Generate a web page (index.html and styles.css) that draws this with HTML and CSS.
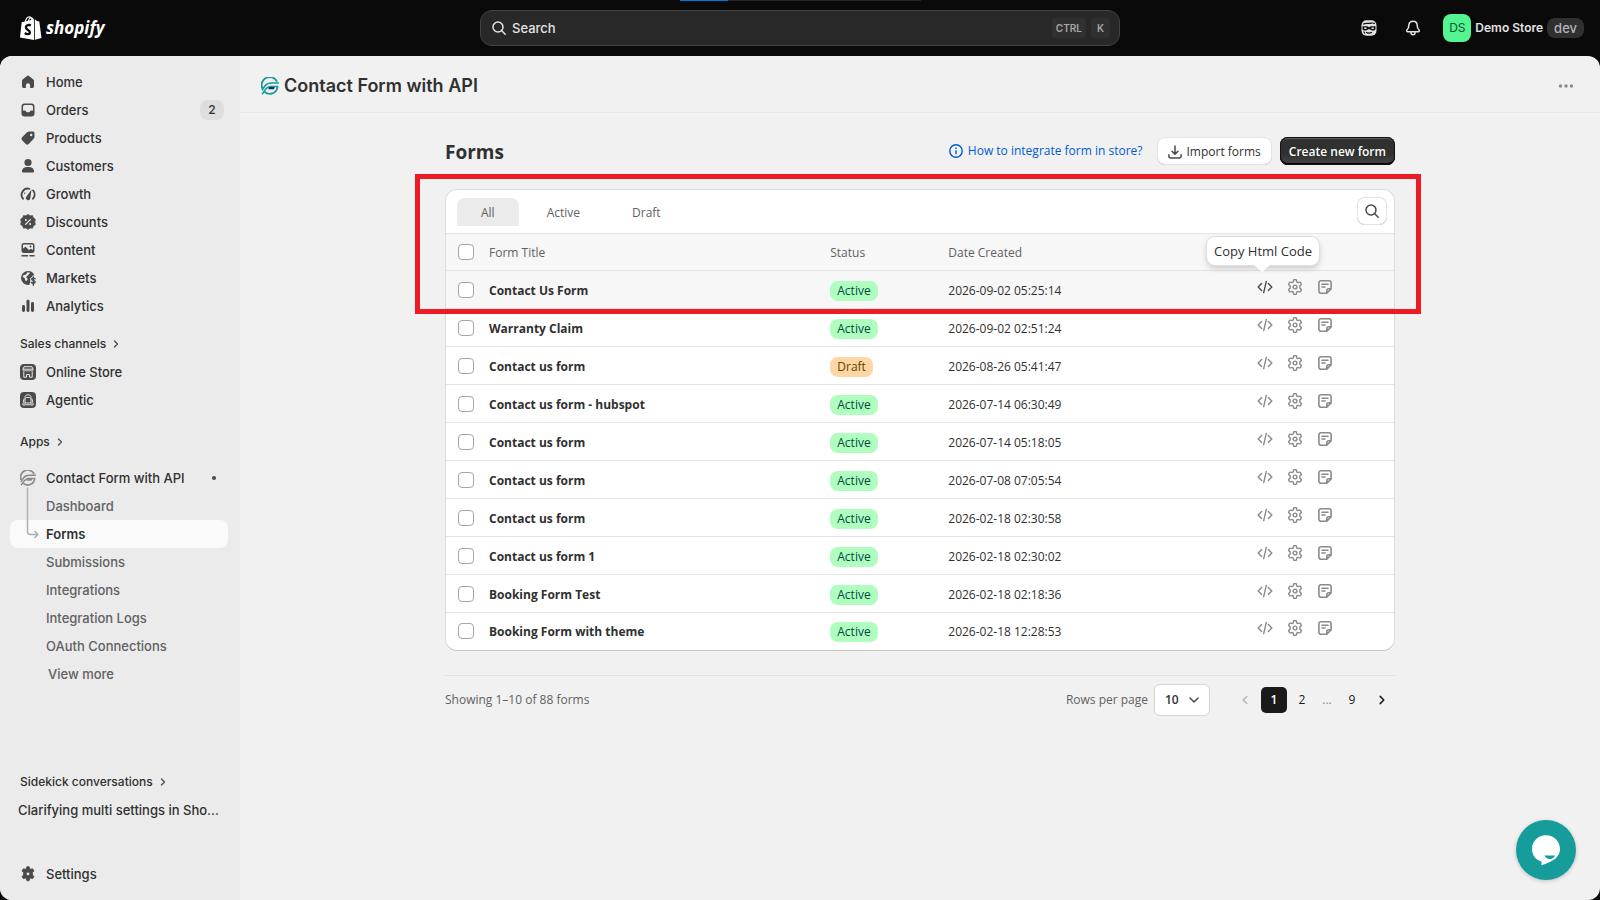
FILE: index.html
```html
<!DOCTYPE html>
<html lang="en">
<head>
<meta charset="utf-8">
<title>Contact Form with API</title>
<link rel="stylesheet" href="styles.css">
</head>
<body>
<svg class="sprite" aria-hidden="true">
  <symbol id="i-code" viewBox="0 0 16 16"><path d="M4.600 4.600 1.200 8l3.400 3.400M11.400 4.600 14.800 8l-3.400 3.400M9.300 2.400 6.700 13.600" fill="none" stroke="currentColor" stroke-width="1.400" stroke-linecap="round" stroke-linejoin="round"/></symbol>
  <symbol id="i-gear" viewBox="0 0 16 16"><path d="M6.500 1.600c.1-.7.5-1.100 1.100-1.100h.8c.6 0 1 .4 1.100 1.100l.2 1.300 1.200.7 1.300-.4c.6-.2 1.100 0 1.400.5l.5.900c.3.500.2 1.100-.3 1.500l-1 .9v2l1 .9c.5.400.6 1 .3 1.500l-.5.900c-.3.500-.8.700-1.400.5l-1.300-.4-1.200.7-.2 1.300c-.1.700-.5 1.100-1.100 1.100h-.8c-.6 0-1-.4-1.100-1.100l-.2-1.300-1.200-.7-1.300.4c-.6.200-1.100 0-1.400-.5l-.5-.9c-.3-.5-.2-1.100.3-1.500l1-.9V7l-1-.9c-.5-.4-.6-1-.3-1.500l.5-.9c.3-.5.8-.7 1.400-.5l1.300.4 1.200-.7z" fill="none" stroke="currentColor" stroke-width="1.400" stroke-linejoin="round"/><circle cx="8" cy="8" r="1.900" fill="none" stroke="currentColor" stroke-width="1.400"/></symbol>
  <symbol id="i-note" viewBox="0 0 16 16"><path d="M4 1.700h8a2.100 2.100 0 0 1 2.100 2.100v6.100L9.800 14.300H4a2.100 2.100 0 0 1-2.100-2.100V3.800A2.100 2.100 0 0 1 4 1.700zM14 9.800h-2.300a1.900 1.900 0 0 0-1.900 1.900v2.500" fill="none" stroke="currentColor" stroke-width="1.600" stroke-linejoin="round"/><path d="M4.900 5.300h6.200M4.900 8h3.200" stroke="currentColor" stroke-width="1.400" stroke-linecap="round"/></symbol>
  <symbol id="i-search" viewBox="0 0 16 16"><circle cx="7" cy="7" r="5" fill="none" stroke="currentColor" stroke-width="1.500"/><path d="m10.800 10.800 3.400 3.400" stroke="currentColor" stroke-width="1.500" stroke-linecap="round"/></symbol>
  <symbol id="i-right" viewBox="0 0 10 10"><path d="m3.500 2 3 3-3 3" fill="none" stroke="currentColor" stroke-width="1.300" stroke-linecap="round" stroke-linejoin="round"/></symbol>
  <symbol id="i-down" viewBox="0 0 12 12"><path d="m2 4 4 4 4-4" fill="none" stroke="currentColor" stroke-width="1.500" stroke-linecap="round" stroke-linejoin="round"/></symbol>
  <symbol id="i-app" viewBox="0 0 18 18"><path d="M16 4.600A8 8 0 0 0 1.400 11.500" fill="none" stroke="var(--ring)" stroke-width="1.900"/><path d="M3.500 14.800A7.800 7.800 0 0 0 16.500 10" fill="none" stroke="var(--ring)" stroke-width="1.900"/><path d="M18.200 6H10.300C6.500 6 4.800 7.600 3.700 9.300L1 13.400M1.200 17.200c2.200-2.800 3.600-7.400 8.100-7.700h8" fill="none" stroke="var(--ring)" stroke-width="1.600"/><path d="M8.300 10h5.500l-.8 2.200H7.200z" fill="var(--core)"/></symbol>
</svg>

<header class="topbar">
  <div class="load-strip"></div>
  <a class="brand" href="#" aria-label="Shopify home">
    <svg width="22" height="24" viewBox="0 0 22 24" aria-hidden="true"><path d="M1.700 6.300 14.200 3.200v20.700L0 21.400z" fill="#fff"/><path d="m15 3.200 1.900 1.900 2.400.3L21.500 22 15 23.800z" fill="#fff"/><path d="M5 6.500C5.800 2.800 7.800.9 9.400.9c1.700 0 2.500 1.700 2.500 4.300M8.200 5.500C8.900 3 10.200 1.600 11.400 1.800c1.200.2 1.700 1.300 1.900 2.400" fill="none" stroke="#fff" stroke-width="1.100"/><path d="M10.800 9.600C9 8.500 5.900 8.900 5.900 11.300c0 2.600 4 2.600 4 5 0 2.500-3.300 2.200-5.100.7" fill="none" stroke="#0a0a0a" stroke-width="2.300"/></svg>
    <span>shopify</span>
  </a>
  <label class="global-search">
    <svg width="16" height="16" aria-hidden="true"><use href="#i-search"/></svg>
    <input type="search" placeholder="Search" aria-label="Search">
    <kbd>CTRL</kbd><kbd>K</kbd>
  </label>
  <div class="top-actions">
    <button class="icon-btn" aria-label="Sidekick"><svg width="16" height="16" viewBox="0 0 16 16"><rect x=".5" y=".3" width="15" height="15.500" rx="5" fill="#e3e3e3"/><path d="M2 4.200c3-1.600 5.500-.3 8-1 1.500-.4 2.500-.3 4 .3" stroke="#111" stroke-width="1.200" fill="none"/><path d="M1.500 6.200h4.800L8 7.200l1.700-1h4.800v2.600c0 1-.6 1.600-1.600 1.600h-2L8 8.900l-2.900 1.500h-2c-1 0-1.600-.6-1.600-1.600z" fill="#111"/><path d="M3.200 8.200h2.300M10.500 8.200h2.300" stroke="#e3e3e3" stroke-width="1.400"/><path d="M5 12.200c1.800 1 4.200 1 6 0M2.500 11.500l1.500 2" stroke="#111" stroke-width="1.200" fill="none"/></svg></button>
    <button class="icon-btn" aria-label="Notifications"><svg width="16" height="16" viewBox="0 0 16 16" fill="none" stroke="#e3e3e3" stroke-width="1.500" stroke-linejoin="round"><path d="M8 1.200c-2.600 0-4.200 1.900-4.200 4.300 0 2.200-.5 3.200-1.700 4.300-.8.800-.4 2 .7 2h10.400c1.100 0 1.500-1.200.7-2-1.200-1.100-1.700-2.100-1.700-4.300 0-2.400-1.600-4.300-4.200-4.300z"/><path d="M6 12v.8a2 2 0 0 0 4 0V12"/></svg></button>
    <button class="store"><span class="avatar">DS</span><span>Demo Store</span><span class="env">dev</span></button>
  </div>
</header>

<div class="shell">
  <nav class="sidebar" aria-label="Main">
    <a href="#"><svg viewBox="0 0 16 16"><path d="M7 1.900a1.500 1.500 0 0 1 2 0l4.400 3.700c.4.300.6.800.6 1.300v5.300c0 1-.8 1.800-1.800 1.800h-2.100v-2.700a2.100 2.100 0 0 0-4.200 0V14H3.800c-1 0-1.800-.8-1.800-1.800V6.900c0-.5.200-1 .6-1.300z"/></svg>Home</a>
    <a href="#"><svg viewBox="0 0 16 16"><path fill-rule="evenodd" d="M4.500 1.500h7a3 3 0 0 1 3 3v7a3 3 0 0 1-3 3h-7a3 3 0 0 1-3-3v-7a3 3 0 0 1 3-3zm.3 1.500A1.800 1.800 0 0 0 3 4.800V8.500h1.800c.5 0 .9.300 1.100.700l.2.400c.2.400.6.600 1 .6h1.800c.4 0 .8-.2 1-.6l.2-.4c.200-.4.600-.7 1.100-.7H13V4.800A1.800 1.800 0 0 0 11.200 3z"/></svg>Orders<span class="count">2</span></a>
    <a href="#"><svg viewBox="0 0 16 16"><path fill-rule="evenodd" d="M9.200 1.500h3.600c1 0 1.700.7 1.700 1.700v3.500c0 .8-.3 1.500-.8 2l-5 5.200a2 2 0 0 1-2.900 0l-3.700-3.700a2 2 0 0 1 0-2.900l5-5c.6-.5 1.300-.8 2.100-.8zm2 4.700a1.200 1.200 0 1 0 0-2.400 1.200 1.200 0 0 0 0 2.400z"/></svg>Products</a>
    <a href="#"><svg viewBox="0 0 16 16"><circle cx="8" cy="4.500" r="3.600"/><path d="M2 13.200c0-2.700 2.300-4.200 6-4.200s6 1.500 6 4.200c0 .8-.5 1.300-1.200 1.300H3.200c-.7 0-1.200-.5-1.200-1.300z"/></svg>Customers</a>
    <a href="#"><svg viewBox="0 0 16 16"><path d="M3 12.700A6.200 6.200 0 0 1 9.300 2.800M13.100 4.500a6.200 6.200 0 0 1-.1 8.200" fill="none" stroke="currentColor" stroke-width="1.900" stroke-linecap="round"/><path d="m11.500 3.600-1.200 8.800a2.200 2.200 0 1 1-4-1.700z"/><path d="m4.300 7 .8.500" stroke="currentColor" stroke-width="1.500"/></svg>Growth</a>
    <a href="#"><svg viewBox="0 0 16 16"><path d="m8 .3 2 1.500 2.500-.3.800 2.300 2.100 1.500L14.800 8l.6 2.500-2.100 1.500-.8 2.300-2.500-.3-2 1.600-2-1.600-2.500.3L2.700 12 .6 10.500 1.200 8 .6 5.300l2.100-1.500.8-2.300L6 1.800z" stroke="currentColor" stroke-width=".6" stroke-linejoin="round"/><path d="m5.600 10.400 4.800-4.800" stroke="#ebebeb" stroke-width="1.300" stroke-linecap="round"/><circle cx="5.900" cy="5.900" r="1" fill="#ebebeb"/><circle cx="10.100" cy="10.100" r="1" fill="#ebebeb"/></svg>Discounts</a>
    <a href="#"><svg viewBox="0 0 16 16"><path fill-rule="evenodd" d="M4 1h8a2.500 2.500 0 0 1 2.500 2.500v5A2.500 2.500 0 0 1 12 11H4a2.500 2.500 0 0 1-2.500-2.500v-5A2.500 2.500 0 0 1 4 1zm-1 5.500L5.500 4.700 9 8l2-1.300 2 1.300V3.500c0-.6-.4-1-1-1H4c-.6 0-1 .4-1 1z"/><circle cx="10.500" cy="4.500" r="1"/><path d="M2 13.800h5.500M10 13.800h4" stroke="currentColor" stroke-width="1.500" stroke-linecap="round"/></svg>Content</a>
    <a href="#"><svg viewBox="0 0 16 16"><path fill-rule="evenodd" d="M8 1a7 7 0 0 1 6.500 4.300l-1.800.3-.7 1.200-1.800 1.400v4l-1 2.700A7 7 0 1 1 8 1zM3.200 5.200 2.800 7l2 1.300.3 2 1.200 1 1.500-2.300-1.700-2L8 5.300l2.200-2.600L7.500 2.200 6 4.600z"/><path d="M15 8.800c-1-1.100-3.300-.9-3.300.5s3.400 1 3.400 2.700-2.700 1.700-3.700.4M13.300 7v8.300" fill="none" stroke="currentColor" stroke-width="1.400" stroke-linecap="round"/></svg>Markets</a>
    <a href="#"><svg viewBox="0 0 16 16"><rect x="2" y="7" width="3" height="7" rx="1.400"/><rect x="6.500" y="1.800" width="3" height="12.200" rx="1.400"/><rect x="11" y="4" width="3" height="10" rx="1.400"/></svg>Analytics</a>

    <a class="section" href="#">Sales channels<svg viewBox="0 0 10 10"><use href="#i-right"/></svg></a>
    <a href="#"><svg viewBox="0 0 16 16"><rect width="16" height="16" rx="4"/><path d="M3.800 7.500v5.700h2.700v-2.700h3v2.700h2.700V7.500M4 2.700h8l1.200 3.100c0 1-1.500 1.500-2.600.6-1 .8-2 .8-2.600 0-.8.8-1.800.8-2.600 0-1.100.9-2.600.4-2.600-.6zM3.300 5.200h9.400" fill="none" stroke="#ebebeb" stroke-linejoin="round"/></svg>Online Store</a>
    <a href="#"><svg viewBox="0 0 16 16"><rect width="16" height="16" rx="4"/><rect x="5" y="5.500" width="6" height="5.500" rx="1.500" fill="none" stroke="#ebebeb"/><path d="M4.800 5.500C5 1.800 11 1.800 11.200 5.500M4.200 6.500 3.200 10M11.800 6.500l1 3.500M5.500 12.800h5" fill="none" stroke="#ebebeb"/><circle cx="4" cy="12" r="1.300" fill="none" stroke="#ebebeb" stroke-width=".9"/><circle cx="12" cy="12" r="1.300" fill="none" stroke="#ebebeb" stroke-width=".9"/></svg>Agentic</a>

    <a class="section apps" href="#">Apps<svg viewBox="0 0 10 10"><use href="#i-right"/></svg></a>
    <a class="app" href="#"><svg class="logo-muted" viewBox="0 0 18 18"><use href="#i-app"/></svg>Contact Form with API<span class="dot"></span></a>
    <div class="sub">
      <svg class="branch" width="14" height="54" viewBox="0 0 14 54" fill="none" stroke="#b0b0b0" stroke-width="1.500" stroke-linecap="round" stroke-linejoin="round" aria-hidden="true"><path d="M1.500 1v43.500a3 3 0 0 0 3 3H12M9 44.500l3 3-3 3"/></svg>
      <a href="#">Dashboard</a>
      <a class="current" href="#" aria-current="page">Forms</a>
      <a href="#">Submissions</a>
      <a href="#">Integrations</a>
      <a href="#">Integration Logs</a>
      <a href="#">OAuth Connections</a>
      <a class="more" href="#">View more</a>
    </div>

    <div class="sidebar-end">
      <a class="section" href="#">Sidekick conversations<svg viewBox="0 0 10 10"><use href="#i-right"/></svg></a>
      <a class="chat-link" href="#">Clarifying multi settings in Sho...</a>
      <a class="settings" href="#"><svg viewBox="0 0 16 16"><path fill-rule="evenodd" d="M6.500 1.500Q6.700.600 7.600.600h.8q.9 0 1.100.9l.3 1.300.8.500 1.300-.4q.9-.3 1.300.5l.5.800q.4.800-.2 1.400l-1 .9v2.400l1 .9q.6.600.2 1.400l-.5.800q-.4.800-1.300.5l-1.300-.4-.8.500-.3 1.300q-.2.900-1.100.9h-.8q-.9 0-1.100-.9l-.3-1.300-.8-.5-1.300.4q-.9.300-1.300-.5l-.5-.8q-.4-.8.200-1.400l1-.9V6.500l-1-.9q-.6-.6-.2-1.400l.5-.8q.4-.8 1.300-.5l1.300.4.8-.5zM8 9.700a1.800 1.800 0 1 0 0-3.600 1.800 1.800 0 0 0 0 3.600z" stroke="currentColor" stroke-width=".8"/></svg>Settings</a>
    </div>
  </nav>

  <main>
    <div class="app-bar">
      <svg class="logo" width="18" height="18" aria-hidden="true"><use href="#i-app"/></svg>
      <h1>Contact Form with API</h1>
      <button class="dots" aria-label="More actions"><svg width="16" height="4" viewBox="0 0 16 4" fill="#8a8a8a"><circle cx="2.500" cy="2" r="1.700"/><circle cx="8" cy="2" r="1.700"/><circle cx="13.500" cy="2" r="1.700"/></svg></button>
    </div>

    <div class="page">
      <div class="page-head">
        <h2>Forms</h2>
        <a class="help" href="#"><svg width="14" height="14" viewBox="0 0 14 14" fill="none" stroke="currentColor" stroke-width="1.400"><circle cx="7" cy="7" r="6.200"/><path d="M7 6.300v4M7 3.600v1.400"/></svg>How to integrate form in store?</a>
        <button class="btn"><svg width="14" height="14" viewBox="0 0 14 14" fill="none" stroke="#4a4a4a" stroke-width="1.500" stroke-linecap="round" stroke-linejoin="round"><path d="M7 .9v8M4 6.200l3 2.900 3-2.900M.9 9.700v1.200c0 1.200.8 2 2 2h8.200c1.200 0 2-.8 2-2V9.700"/></svg>Import forms</button>
        <button class="btn primary">Create new form</button>
      </div>

      <div class="card-wrap">
        <section class="card">
          <div class="tabs">
            <button class="tab selected">All</button>
            <button class="tab">Active</button>
            <button class="tab">Draft</button>
            <button class="search-btn" aria-label="Search forms"><svg width="16" height="16"><use href="#i-search"/></svg></button>
          </div>
          <table>
            <colgroup><col class="c-check"><col class="c-title"><col class="c-status"><col><col class="c-act"></colgroup>
            <thead><tr><th><input type="checkbox" aria-label="Select all forms"></th><th>Form Title</th><th>Status</th><th>Date Created</th><th></th></tr></thead>
            <tbody>
              <tr class="hovered"><td><input type="checkbox" aria-label="Select Contact Us Form"></td><td class="title">Contact Us Form</td><td><span class="badge">Active</span></td><td>2026-09-02 05:25:14</td><td><div class="acts"><button aria-label="Copy Html Code" class="hot"><svg><use href="#i-code"/></svg><span class="tip">Copy Html Code</span></button><button aria-label="Settings"><svg><use href="#i-gear"/></svg></button><button aria-label="Submissions"><svg><use href="#i-note"/></svg></button></div></td></tr>
              <tr><td><input type="checkbox" aria-label="Select Warranty Claim"></td><td class="title">Warranty Claim</td><td><span class="badge">Active</span></td><td>2026-09-02 02:51:24</td><td><div class="acts"><button aria-label="Copy Html Code"><svg><use href="#i-code"/></svg></button><button aria-label="Settings"><svg><use href="#i-gear"/></svg></button><button aria-label="Submissions"><svg><use href="#i-note"/></svg></button></div></td></tr>
              <tr><td><input type="checkbox" aria-label="Select Contact us form"></td><td class="title">Contact us form</td><td><span class="badge draft">Draft</span></td><td>2026-08-26 05:41:47</td><td><div class="acts"><button aria-label="Copy Html Code"><svg><use href="#i-code"/></svg></button><button aria-label="Settings"><svg><use href="#i-gear"/></svg></button><button aria-label="Submissions"><svg><use href="#i-note"/></svg></button></div></td></tr>
              <tr><td><input type="checkbox" aria-label="Select Contact us form - hubspot"></td><td class="title">Contact us form - hubspot</td><td><span class="badge">Active</span></td><td>2026-07-14 06:30:49</td><td><div class="acts"><button aria-label="Copy Html Code"><svg><use href="#i-code"/></svg></button><button aria-label="Settings"><svg><use href="#i-gear"/></svg></button><button aria-label="Submissions"><svg><use href="#i-note"/></svg></button></div></td></tr>
              <tr><td><input type="checkbox" aria-label="Select Contact us form"></td><td class="title">Contact us form</td><td><span class="badge">Active</span></td><td>2026-07-14 05:18:05</td><td><div class="acts"><button aria-label="Copy Html Code"><svg><use href="#i-code"/></svg></button><button aria-label="Settings"><svg><use href="#i-gear"/></svg></button><button aria-label="Submissions"><svg><use href="#i-note"/></svg></button></div></td></tr>
              <tr><td><input type="checkbox" aria-label="Select Contact us form"></td><td class="title">Contact us form</td><td><span class="badge">Active</span></td><td>2026-07-08 07:05:54</td><td><div class="acts"><button aria-label="Copy Html Code"><svg><use href="#i-code"/></svg></button><button aria-label="Settings"><svg><use href="#i-gear"/></svg></button><button aria-label="Submissions"><svg><use href="#i-note"/></svg></button></div></td></tr>
              <tr><td><input type="checkbox" aria-label="Select Contact us form"></td><td class="title">Contact us form</td><td><span class="badge">Active</span></td><td>2026-02-18 02:30:58</td><td><div class="acts"><button aria-label="Copy Html Code"><svg><use href="#i-code"/></svg></button><button aria-label="Settings"><svg><use href="#i-gear"/></svg></button><button aria-label="Submissions"><svg><use href="#i-note"/></svg></button></div></td></tr>
              <tr><td><input type="checkbox" aria-label="Select Contact us form 1"></td><td class="title">Contact us form 1</td><td><span class="badge">Active</span></td><td>2026-02-18 02:30:02</td><td><div class="acts"><button aria-label="Copy Html Code"><svg><use href="#i-code"/></svg></button><button aria-label="Settings"><svg><use href="#i-gear"/></svg></button><button aria-label="Submissions"><svg><use href="#i-note"/></svg></button></div></td></tr>
              <tr><td><input type="checkbox" aria-label="Select Booking Form Test"></td><td class="title">Booking Form Test</td><td><span class="badge">Active</span></td><td>2026-02-18 02:18:36</td><td><div class="acts"><button aria-label="Copy Html Code"><svg><use href="#i-code"/></svg></button><button aria-label="Settings"><svg><use href="#i-gear"/></svg></button><button aria-label="Submissions"><svg><use href="#i-note"/></svg></button></div></td></tr>
              <tr><td><input type="checkbox" aria-label="Select Booking Form with theme"></td><td class="title">Booking Form with theme</td><td><span class="badge">Active</span></td><td>2026-02-18 12:28:53</td><td><div class="acts"><button aria-label="Copy Html Code"><svg><use href="#i-code"/></svg></button><button aria-label="Settings"><svg><use href="#i-gear"/></svg></button><button aria-label="Submissions"><svg><use href="#i-note"/></svg></button></div></td></tr>
            </tbody>
          </table>
        </section>
        <div class="highlight"></div>
      </div>

      <footer class="pager">
        <span class="showing">Showing 1–10 of 88 forms</span>
        <label for="rows">Rows per page</label>
        <div class="select"><select id="rows"><option>10</option><option>25</option><option>50</option></select><svg width="12" height="12"><use href="#i-down"/></svg></div>
        <div class="pages">
          <button class="prev" aria-label="Previous page" disabled><svg width="12" height="12" viewBox="0 0 10 10"><path d="m6.500 2-3 3 3 3" fill="none" stroke="currentColor" stroke-width="1.200" stroke-linecap="round" stroke-linejoin="round"/></svg></button>
          <button class="on" aria-current="page">1</button>
          <button>2</button>
          <span>...</span>
          <button>9</button>
          <button class="next" aria-label="Next page"><svg width="12" height="12"><use href="#i-right"/></svg></button>
        </div>
      </footer>
    </div>
  </main>
</div>

<button class="chat" aria-label="Open chat"><svg width="60" height="60" viewBox="0 0 60 60"><path d="M30 15.200c7.900 0 14 6 14 13.800 0 7.300-5.800 12.400-18.500 16.200v-3.700C19.800 39.700 16 35.200 16 29c0-7.800 6.100-13.800 14-13.800z" fill="#fff"/><path d="M28.500 35.500h10.600c-.9 2.200-2.800 3.400-5.300 3.400s-4.400-1.200-5.300-3.400z" fill="#179c9c"/></svg></button>
</body>
</html>
```
FILE: styles.css
```css
* { box-sizing: border-box; }

body {
  margin: 0;
  min-height: 100vh;
  display: flex;
  flex-direction: column;
  background: #0a0a0a;
  color: #303030;
  font: 500 13px/20px Inter, sans-serif;
}

a { color: inherit; text-decoration: none; }
button { margin: 0; padding: 0; border: 0; background: none; color: inherit; font: inherit; }
h1, h2 { margin: 0; }
.sprite { position: absolute; width: 0; height: 0; }

/* Top bar */
.topbar {
  position: relative;
  height: 56px;
  display: grid;
  grid-template-columns: 1fr minmax(0, 640px) 1fr;
  align-items: center;
}
.load-strip {
  position: absolute;
  top: 0;
  left: 50%;
  width: 241px;
  height: 1px;
  margin-left: -120px;
  background: linear-gradient(to right, #0078d7 48px, #262626 48px);
}
.brand {
  display: flex;
  align-items: center;
  gap: 4px;
  padding-left: 20px;
  color: #fff;
  font: italic 700 17px/24px "Open Sans", sans-serif;
}
.global-search {
  display: flex;
  align-items: center;
  gap: 5px;
  height: 36px;
  padding: 0 9px 0 10px;
  border: 1px solid #424242;
  border-radius: 12px;
  background: #282828;
  color: #e3e3e3;
}
.global-search input {
  flex: 1;
  min-width: 0;
  padding: 0;
  border: 0;
  outline: 0;
  background: none;
  color: #e3e3e3;
  font: 500 13px/20px Inter, sans-serif;
}
.global-search input::placeholder { color: #e3e3e3; opacity: 1; }
kbd {
  height: 20px;
  padding: 0 4px;
  border-radius: 4px;
  background: #303030;
  color: #a6a6a6;
  font: 600 10px/20px Inter, sans-serif;
}
kbd + kbd { padding: 0 6px; }
.top-actions { display: flex; align-items: center; justify-content: flex-end; padding-right: 16px; }
.icon-btn { display: flex; margin-right: 28px; }
.icon-btn + .icon-btn { margin-right: 22px; }
.store { display: flex; align-items: center; gap: 4px; color: #e3e3e3; font-weight: 600; font-size: 12px; }
.avatar {
  width: 28px;
  height: 28px;
  border-radius: 8px;
  background: #52f58f;
  color: #0c5132;
  font-weight: 400;
  line-height: 28px;
}
.env { padding: 0 7px; border-radius: 8px; background: #303030; color: #b5b5b5; font-weight: 500; font-size: 13px; }

/* Shell */
.shell {
  flex: 1;
  display: grid;
  grid-template-columns: 240px minmax(0, 1fr);
  border-radius: 12px;
  overflow: hidden;
  background: #f1f1f1;
}
.sidebar { display: flex; flex-direction: column; padding: 12px 12px 12px 10px; background: #ebebeb; }
.sidebar a { display: flex; align-items: center; height: 28px; padding-left: 10px; border-radius: 8px; white-space: nowrap; }
.sidebar a > svg { width: 16px; height: 16px; margin-right: 10px; fill: #4a4a4a; color: #4a4a4a; }
.sidebar .section { margin-top: 10px; font-size: 12px; }
.sidebar .section > svg { width: 10px; height: 10px; margin: 0 0 0 5px; }
.sidebar .apps { margin-top: 14px; }
.sidebar .app { margin-top: 8px; }
.count {
  width: 24px;
  height: 20px;
  margin: 0 4px 0 auto;
  border-radius: 8px;
  background: #dedede;
  font-size: 12px;
  text-align: center;
}
.dot { width: 4px; height: 4px; margin: 0 12px 0 auto; border-radius: 50%; background: #4a4a4a; }
.logo { --ring: #179c9c; --core: #14285a; }
.logo-muted { --ring: #8a8a8a; --core: #8a8a8a; }
.sub { position: relative; color: #616161; font-weight: 450; }
.sub a { padding-left: 36px; }
.sub .more { padding-left: 38px; }
.sub .current { background: #fafafa; color: #303030; font-weight: 600; }
.branch { position: absolute; top: -5px; left: 16px; }
.sidebar-end { margin-top: auto; }
.sidebar .chat-link { padding-left: 8px; }
.sidebar .settings { margin-top: 36px; }

/* App bar */
.app-bar {
  display: flex;
  align-items: center;
  gap: 5px;
  height: 57px;
  padding: 4px 26px 0 21px;
  border-bottom: 1px solid #e8e8e8;
}
.app-bar h1 { font-size: 18px; line-height: 24px; font-weight: 600; }
.dots { display: flex; margin-left: auto; }

/* Page */
.page {
  max-width: 998px;
  margin: 0 auto;
  padding: 24px;
  font-family: "Open Sans", sans-serif;
  font-weight: 400;
  font-size: 12px;
}
.page-head { display: flex; align-items: center; gap: 8px; height: 28px; margin-bottom: 24px; }
.page-head h2 { margin-right: auto; padding-top: 2px; font-size: 19px; line-height: 24px; font-weight: 700; }
.help { display: flex; align-items: center; gap: 5px; margin-right: 6px; color: #005bd3; }
.btn {
  display: flex;
  align-items: center;
  gap: 5px;
  height: 28px;
  padding: 1px 11px 0;
  border-radius: 8px;
  background: #fff;
  box-shadow: inset 0 0 0 1px #e3e3e3, inset 0 -1px 0 #b5b5b5;
  font-weight: 500;
}
.btn.primary {
  padding: 1px 9px 0;
  background: linear-gradient(#303030 60%, #474747);
  box-shadow: inset 0 0 0 1px #111, inset 0 2px 0 #5c5c5c, inset 0 -2px 0 #000;
  color: #fff;
  font-weight: 600;
}
.card-wrap { position: relative; }
.card {
  overflow: hidden;
  border: 1px solid #dcdcdc;
  border-bottom-color: #c6c6c6;
  border-radius: 12px;
  background: #fff;
}
.tabs { display: flex; align-items: center; gap: 4px; height: 43px; padding: 0 7px 0 11px; }
.tab { height: 28px; padding: 2px 24px 0; border-radius: 8px 8px 0 0; color: #616161; font-weight: 500; }
.tab.selected { background: #ebebeb; }
.search-btn {
  display: grid;
  place-items: center;
  width: 30px;
  height: 28px;
  margin: 0 0 2px auto;
  border-radius: 8px;
  box-shadow: inset 0 0 0 1px #e3e3e3, inset 0 -1px 0 #b5b5b5;
  color: #4a4a4a;
}
table { width: 100%; border-collapse: collapse; table-layout: fixed; }
.c-check { width: 43px; }
.c-title { width: 36%; }
.c-status { width: 118px; }
.c-act { width: 137px; }
th, td { height: 38px; padding: 2px 0 0; border-top: 1px solid #e3e3e3; text-align: left; }
th { height: 37px; background: #f7f7f7; color: #616161; font-weight: 500; }
tr:last-child td { height: 37px; }
td:first-child, th:first-child { padding: 0 0 0 12px; }
td:last-child { padding: 0; }
.title { font-weight: 700; }
.hovered { background: #f7f7f7; }
input[type="checkbox"] {
  display: block;
  appearance: none;
  width: 16px;
  height: 16px;
  margin: 0;
  border: 1px solid #a6a6a6;
  border-radius: 4px;
  background: #fff;
}
.badge { display: inline-block; padding: 0 7px; border-radius: 8px; background: #affebf; color: #014b40; }
.badge.draft { background: #ffd6a4; color: #5e4200; }
.acts { display: flex; gap: 14px; padding-bottom: 6px; color: #8a8a8a; }
.acts button { position: relative; width: 16px; height: 16px; }
.acts svg { display: block; width: 16px; height: 16px; }
.acts .hot { color: #4a4a4a; }
.tip {
  position: absolute;
  right: -46px;
  bottom: 30px;
  padding: 4px 7px;
  border-radius: 8px;
  background: #fff;
  box-shadow: 0 0 0 1px #dedede, 0 3px 6px #00000033;
  color: #303030;
  font-size: 13px;
  white-space: nowrap;
}
.tip::after {
  content: "";
  position: absolute;
  top: 100%;
  right: 49px;
  border: 8px solid transparent;
  border-top: 7px solid #fff;
  border-bottom: 0;
}
.highlight {
  position: absolute;
  top: -15px;
  left: -30px;
  right: -26px;
  height: 140px;
  border: 5px solid #ed1c24;
  pointer-events: none;
}

/* Pager */
.pager {
  display: flex;
  align-items: center;
  gap: 6px;
  margin-top: 24px;
  padding-top: 8px;
  border-top: 1px solid #e3e3e3;
  color: #616161;
}
.showing { margin-right: auto; }
.select { position: relative; color: #4a4a4a; }
.select select {
  appearance: none;
  width: 56px;
  height: 32px;
  padding: 0 0 0 10px;
  border: 1px solid #d4d4d4;
  border-radius: 6px;
  background: #fff;
  color: #303030;
  font: 600 12px/20px "Open Sans", sans-serif;
}
.select svg { position: absolute; top: 10px; right: 10px; pointer-events: none; }
.pages { display: flex; align-items: center; margin-left: 16px; color: #1a1a1a; font-weight: 500; }
.pages button, .pages span { display: grid; place-items: center; min-width: 26px; height: 26px; border-radius: 5px; }
.pages button { margin-right: 2px; }
.pages span { min-width: 20px; margin-right: 2px; color: #8a8a8a; font-weight: 400; }
.pages .prev { margin: 0 3px 0 0; color: #b5b5b5; }
.pages .on { background: #1a1a1a; color: #fff; font-weight: 600; }
.pages .next { margin: 0 0 0 2px; }

.chat {
  position: fixed;
  right: 24px;
  bottom: 20px;
  width: 60px;
  height: 60px;
  border-radius: 50%;
  background: #179c9c;
  box-shadow: 0 1px 4px #00000033;
}
```
